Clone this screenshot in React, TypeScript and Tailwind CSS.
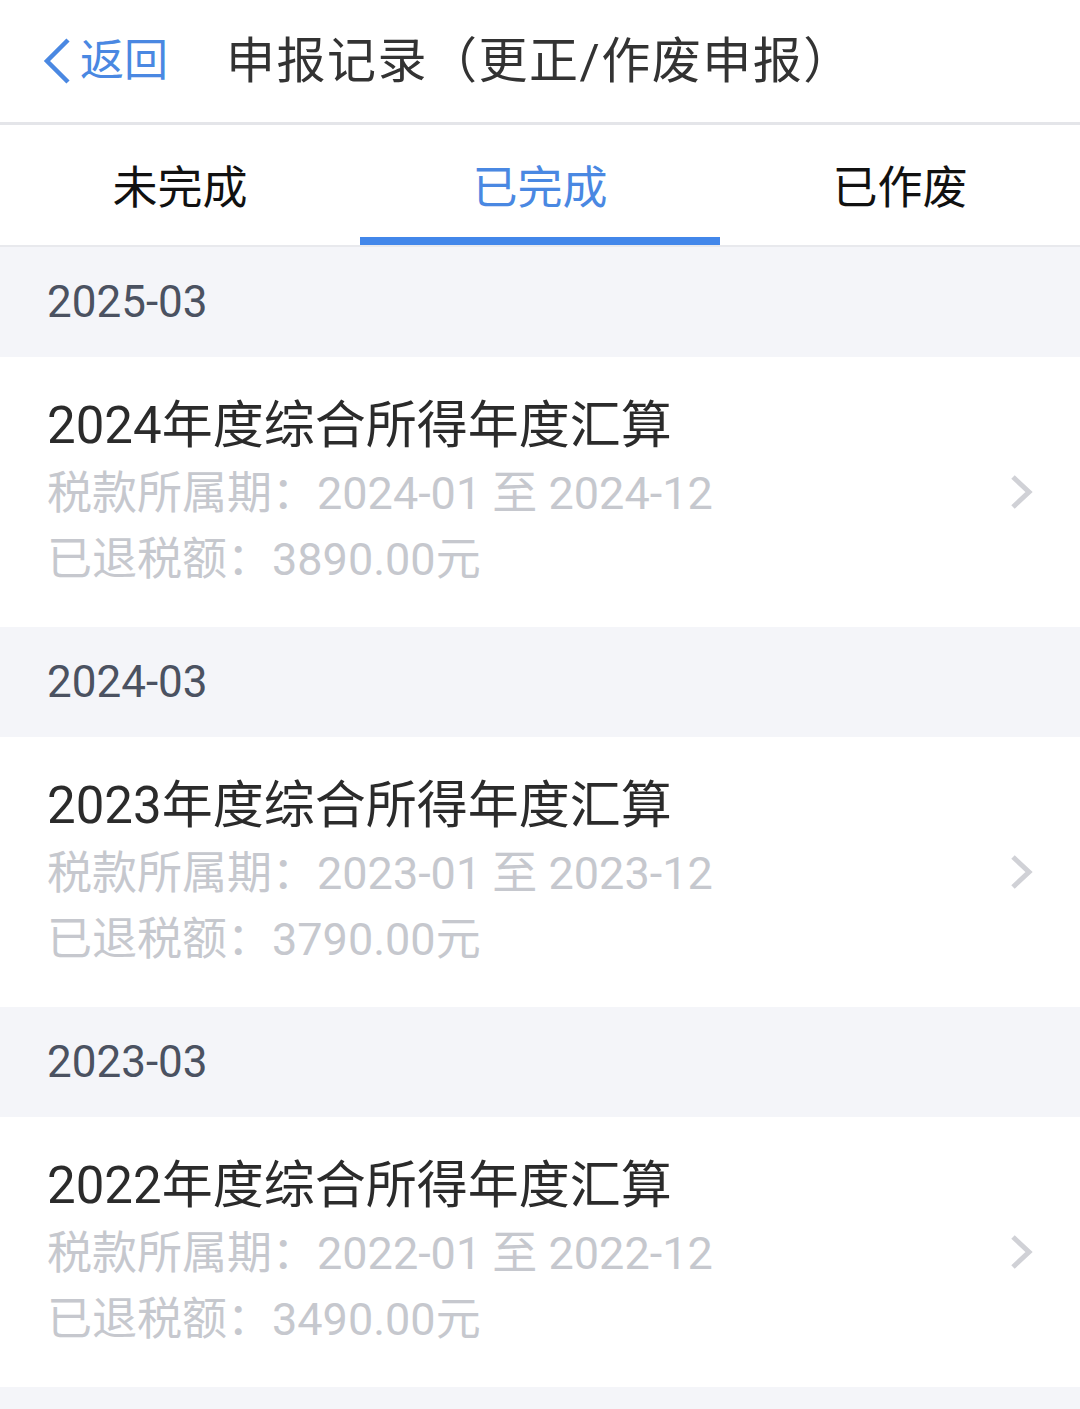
const records = [
  { month: '2025-03', year: 2024, refund: '3890.00' },
  { month: '2024-03', year: 2023, refund: '3790.00' },
  { month: '2023-03', year: 2022, refund: '3490.00' },
]

const font = { fontFamily: 'Roboto, "Noto Sans CJK SC", sans-serif' }

function ChevronRight() {
  return (
    <svg width="24" height="36" viewBox="0 0 24 36" className="shrink-0">
      <path d="M3 3 L19 18 L3 33" fill="none" stroke="#d0d1d6" strokeWidth="5" />
    </svg>
  )
}

export default function App() {
  const tabs = ['未完成', '已完成', '已作废']
  const active = 1

  return (
    <div className="min-h-[1409px] bg-[#f4f5f9]" style={font}>
      <div className="h-[125px] bg-white flex items-center border-b-[3px] border-[#e4e5e9]">
        <div className="flex items-center pl-[42px] w-[226px]">
          <svg width="30" height="48" viewBox="0 0 30 48" className="shrink-0">
            <path d="M26 3 L5 24 L26 45" fill="none" stroke="#4a88e2" strokeWidth="4.5" />
          </svg>
          <span className="ml-[8px] text-[44px] leading-none text-[#4a88e2]">返回</span>
        </div>
        <h1 className="text-[49px] leading-none tracking-[1.5px] text-[#333333] font-normal">申报记录（更正/作废申报）</h1>
      </div>

      <div className="h-[122px] bg-white flex border-b-[2px] border-[#e8e9ed]">
        {tabs.map((t, i) => (
          <div key={t} className="flex-1 relative flex items-center justify-center pt-[6px]">
            <span className={`text-[45px] leading-none ${i === active ? 'text-[#4a88e2]' : 'text-[#111111]'}`}>{t}</span>
            {i === active && <div className="absolute left-0 right-0 bottom-0 h-[8px] bg-[#4287ea]" />}
          </div>
        ))}
      </div>

      {records.map((r) => (
        <div key={r.month}>
          <div className="h-[110px] flex items-center px-[47px] text-[44px] text-[#4b5261]">{r.month}</div>
          <div className="bg-white h-[270px] flex items-center justify-between pl-[47px] pr-[46px]">
            <div className="flex flex-col">
              <div className="text-[51px] leading-[70px] text-[#2b2b2b]">{r.year}年度综合所得年度汇算</div>
              <div className="text-[45px] leading-[66px] text-[#c6c8ce]">
                税款所属期：{r.year}-01 至 {r.year}-12
              </div>
              <div className="text-[45px] leading-[66px] text-[#c6c8ce]">已退税额：{r.refund}元</div>
            </div>
            <ChevronRight />
          </div>
        </div>
      ))}
    </div>
  )
}
